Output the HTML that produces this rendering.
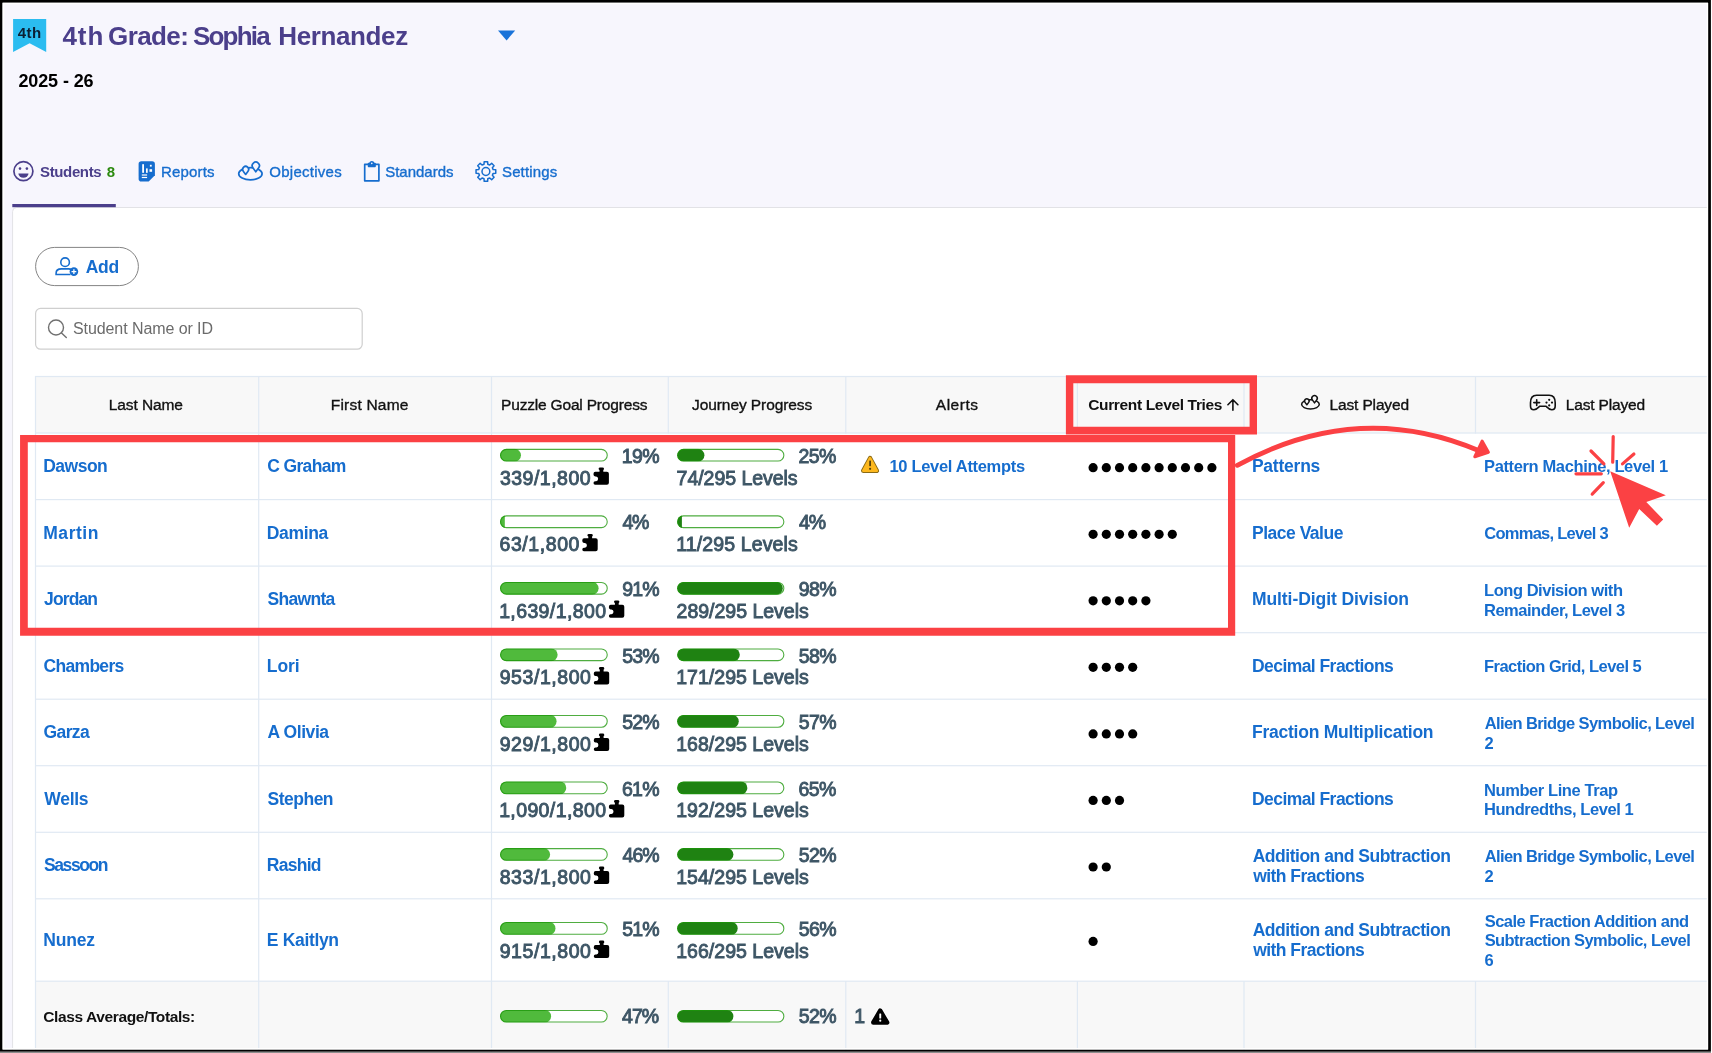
<!DOCTYPE html>
<html><head><meta charset="utf-8"><title>Students</title>
<style>
html,body{margin:0;padding:0}
body{width:1712px;height:1053px;position:relative;overflow:hidden;background:#f7f6fd;font-family:"Liberation Sans", sans-serif}
svg{position:absolute;left:0;top:0}
#bg{z-index:0} #tx{position:absolute;left:0;top:0;z-index:1;will-change:transform} #an{z-index:2}
.t{position:absolute;white-space:nowrap;line-height:20px}
</style></head><body>
<svg id="bg" width="1712" height="1053" viewBox="0 0 1712 1053">
<rect x="12.6" y="207.5" width="1720" height="900" rx="4" fill="#fff" stroke="#e2e2e6" stroke-width="1"/>
<rect x="12.3" y="204" width="103.5" height="3.2" fill="#4b3f8b"/>
<rect x="35.5" y="376.5" width="1700" height="57" fill="#f8f8f8"/>
<rect x="35.5" y="981.2" width="1700" height="80" fill="#f8f8f8"/>
<rect x="35" y="375.9" width="1700" height="1.2" fill="#e0e9f3"/>
<rect x="35" y="432.4" width="1700" height="1.2" fill="#e0e9f3"/>
<rect x="35" y="499.0" width="1700" height="1.2" fill="#e0e9f3"/>
<rect x="35" y="565.5" width="1700" height="1.2" fill="#e0e9f3"/>
<rect x="35" y="632.1" width="1700" height="1.2" fill="#e0e9f3"/>
<rect x="35" y="698.6" width="1700" height="1.2" fill="#e0e9f3"/>
<rect x="35" y="765.1" width="1700" height="1.2" fill="#e0e9f3"/>
<rect x="35" y="831.7" width="1700" height="1.2" fill="#e0e9f3"/>
<rect x="35" y="898.2" width="1700" height="1.2" fill="#e0e9f3"/>
<rect x="35" y="980.6" width="1700" height="1.2" fill="#e0e9f3"/>
<rect x="34.9" y="376" width="1.2" height="57.6" fill="#e0e9f3"/>
<rect x="34.9" y="981" width="1.2" height="80" fill="#e0e9f3"/>
<rect x="258.1" y="376" width="1.2" height="57.6" fill="#e0e9f3"/>
<rect x="258.1" y="981" width="1.2" height="80" fill="#e0e9f3"/>
<rect x="490.9" y="376" width="1.2" height="57.6" fill="#e0e9f3"/>
<rect x="490.9" y="981" width="1.2" height="80" fill="#e0e9f3"/>
<rect x="667.7" y="376" width="1.2" height="57.6" fill="#e0e9f3"/>
<rect x="667.7" y="981" width="1.2" height="80" fill="#e0e9f3"/>
<rect x="845.2" y="376" width="1.2" height="57.6" fill="#e0e9f3"/>
<rect x="845.2" y="981" width="1.2" height="80" fill="#e0e9f3"/>
<rect x="1076.8" y="376" width="1.2" height="57.6" fill="#e0e9f3"/>
<rect x="1076.8" y="981" width="1.2" height="80" fill="#e0e9f3"/>
<rect x="1243.4" y="376" width="1.2" height="57.6" fill="#e0e9f3"/>
<rect x="1243.4" y="981" width="1.2" height="80" fill="#e0e9f3"/>
<rect x="1474.9" y="376" width="1.2" height="57.6" fill="#e0e9f3"/>
<rect x="1474.9" y="981" width="1.2" height="80" fill="#e0e9f3"/>
<rect x="34.9" y="433" width="1.2" height="548" fill="#e0e9f3"/>
<rect x="258.1" y="433" width="1.2" height="548" fill="#e0e9f3"/>
<rect x="490.9" y="433" width="1.2" height="548" fill="#e0e9f3"/>
<rect x="500.00" y="448.80" width="107.80" height="12.80" rx="6.40" fill="#fff"/>
<clipPath id="c34"><rect x="500.00" y="448.80" width="107.80" height="12.80" rx="6.40"/></clipPath>
<rect clip-path="url(#c34)" x="500.00" y="448.80" width="20.98" height="12.80" rx="6.40" fill="#50ba3c"/>
<rect x="500.55" y="449.35" width="106.70" height="11.70" rx="5.85" fill="none" stroke="#1e960a" stroke-opacity="0.78" stroke-width="1.1"/>
<rect x="677.10" y="448.80" width="107.30" height="12.80" rx="6.40" fill="#fff"/>
<clipPath id="c38"><rect x="677.10" y="448.80" width="107.30" height="12.80" rx="6.40"/></clipPath>
<rect clip-path="url(#c38)" x="677.10" y="448.80" width="27.32" height="12.80" rx="6.40" fill="#1f8212"/>
<rect x="677.65" y="449.35" width="106.20" height="11.70" rx="5.85" fill="none" stroke="#1e960a" stroke-opacity="0.78" stroke-width="1.1"/>
<rect x="500.00" y="515.34" width="107.80" height="12.80" rx="6.40" fill="#fff"/>
<clipPath id="c42"><rect x="500.00" y="515.34" width="107.80" height="12.80" rx="6.40"/></clipPath>
<rect clip-path="url(#c42)" x="500.00" y="515.34" width="4.81" height="12.80" rx="0.00" fill="#50ba3c"/>
<rect x="500.55" y="515.89" width="106.70" height="11.70" rx="5.85" fill="none" stroke="#1e960a" stroke-opacity="0.78" stroke-width="1.1"/>
<rect x="677.10" y="515.34" width="107.30" height="12.80" rx="6.40" fill="#fff"/>
<clipPath id="c46"><rect x="677.10" y="515.34" width="107.30" height="12.80" rx="6.40"/></clipPath>
<rect clip-path="url(#c46)" x="677.10" y="515.34" width="4.79" height="12.80" rx="0.00" fill="#1f8212"/>
<rect x="677.65" y="515.89" width="106.20" height="11.70" rx="5.85" fill="none" stroke="#1e960a" stroke-opacity="0.78" stroke-width="1.1"/>
<rect x="500.00" y="581.88" width="107.80" height="12.80" rx="6.40" fill="#fff"/>
<clipPath id="c50"><rect x="500.00" y="581.88" width="107.80" height="12.80" rx="6.40"/></clipPath>
<rect clip-path="url(#c50)" x="500.00" y="581.88" width="98.60" height="12.80" rx="6.40" fill="#50ba3c"/>
<rect x="500.55" y="582.43" width="106.70" height="11.70" rx="5.85" fill="none" stroke="#1e960a" stroke-opacity="0.78" stroke-width="1.1"/>
<rect x="677.10" y="581.88" width="107.30" height="12.80" rx="6.40" fill="#fff"/>
<clipPath id="c54"><rect x="677.10" y="581.88" width="107.30" height="12.80" rx="6.40"/></clipPath>
<rect clip-path="url(#c54)" x="677.10" y="581.88" width="105.65" height="12.80" rx="6.40" fill="#1f8212"/>
<rect x="677.65" y="582.43" width="106.20" height="11.70" rx="5.85" fill="none" stroke="#1e960a" stroke-opacity="0.78" stroke-width="1.1"/>
<rect x="500.00" y="648.42" width="107.80" height="12.80" rx="6.40" fill="#fff"/>
<clipPath id="c58"><rect x="500.00" y="648.42" width="107.80" height="12.80" rx="6.40"/></clipPath>
<rect clip-path="url(#c58)" x="500.00" y="648.42" width="57.63" height="12.80" rx="6.40" fill="#50ba3c"/>
<rect x="500.55" y="648.97" width="106.70" height="11.70" rx="5.85" fill="none" stroke="#1e960a" stroke-opacity="0.78" stroke-width="1.1"/>
<rect x="677.10" y="648.42" width="107.30" height="12.80" rx="6.40" fill="#fff"/>
<clipPath id="c62"><rect x="677.10" y="648.42" width="107.30" height="12.80" rx="6.40"/></clipPath>
<rect clip-path="url(#c62)" x="677.10" y="648.42" width="62.73" height="12.80" rx="6.40" fill="#1f8212"/>
<rect x="677.65" y="648.97" width="106.20" height="11.70" rx="5.85" fill="none" stroke="#1e960a" stroke-opacity="0.78" stroke-width="1.1"/>
<rect x="500.00" y="714.96" width="107.80" height="12.80" rx="6.40" fill="#fff"/>
<clipPath id="c66"><rect x="500.00" y="714.96" width="107.80" height="12.80" rx="6.40"/></clipPath>
<rect clip-path="url(#c66)" x="500.00" y="714.96" width="56.56" height="12.80" rx="6.40" fill="#50ba3c"/>
<rect x="500.55" y="715.51" width="106.70" height="11.70" rx="5.85" fill="none" stroke="#1e960a" stroke-opacity="0.78" stroke-width="1.1"/>
<rect x="677.10" y="714.96" width="107.30" height="12.80" rx="6.40" fill="#fff"/>
<clipPath id="c70"><rect x="677.10" y="714.96" width="107.30" height="12.80" rx="6.40"/></clipPath>
<rect clip-path="url(#c70)" x="677.10" y="714.96" width="61.66" height="12.80" rx="6.40" fill="#1f8212"/>
<rect x="677.65" y="715.51" width="106.20" height="11.70" rx="5.85" fill="none" stroke="#1e960a" stroke-opacity="0.78" stroke-width="1.1"/>
<rect x="500.00" y="781.50" width="107.80" height="12.80" rx="6.40" fill="#fff"/>
<clipPath id="c74"><rect x="500.00" y="781.50" width="107.80" height="12.80" rx="6.40"/></clipPath>
<rect clip-path="url(#c74)" x="500.00" y="781.50" width="66.26" height="12.80" rx="6.40" fill="#50ba3c"/>
<rect x="500.55" y="782.05" width="106.70" height="11.70" rx="5.85" fill="none" stroke="#1e960a" stroke-opacity="0.78" stroke-width="1.1"/>
<rect x="677.10" y="781.50" width="107.30" height="12.80" rx="6.40" fill="#fff"/>
<clipPath id="c78"><rect x="677.10" y="781.50" width="107.30" height="12.80" rx="6.40"/></clipPath>
<rect clip-path="url(#c78)" x="677.10" y="781.50" width="70.25" height="12.80" rx="6.40" fill="#1f8212"/>
<rect x="677.65" y="782.05" width="106.20" height="11.70" rx="5.85" fill="none" stroke="#1e960a" stroke-opacity="0.78" stroke-width="1.1"/>
<rect x="500.00" y="848.04" width="107.80" height="12.80" rx="6.40" fill="#fff"/>
<clipPath id="c82"><rect x="500.00" y="848.04" width="107.80" height="12.80" rx="6.40"/></clipPath>
<rect clip-path="url(#c82)" x="500.00" y="848.04" width="50.09" height="12.80" rx="6.40" fill="#50ba3c"/>
<rect x="500.55" y="848.59" width="106.70" height="11.70" rx="5.85" fill="none" stroke="#1e960a" stroke-opacity="0.78" stroke-width="1.1"/>
<rect x="677.10" y="848.04" width="107.30" height="12.80" rx="6.40" fill="#fff"/>
<clipPath id="c86"><rect x="677.10" y="848.04" width="107.30" height="12.80" rx="6.40"/></clipPath>
<rect clip-path="url(#c86)" x="677.10" y="848.04" width="56.30" height="12.80" rx="6.40" fill="#1f8212"/>
<rect x="677.65" y="848.59" width="106.20" height="11.70" rx="5.85" fill="none" stroke="#1e960a" stroke-opacity="0.78" stroke-width="1.1"/>
<rect x="500.00" y="922.00" width="107.80" height="12.80" rx="6.40" fill="#fff"/>
<clipPath id="c90"><rect x="500.00" y="922.00" width="107.80" height="12.80" rx="6.40"/></clipPath>
<rect clip-path="url(#c90)" x="500.00" y="922.00" width="55.48" height="12.80" rx="6.40" fill="#50ba3c"/>
<rect x="500.55" y="922.55" width="106.70" height="11.70" rx="5.85" fill="none" stroke="#1e960a" stroke-opacity="0.78" stroke-width="1.1"/>
<rect x="677.10" y="922.00" width="107.30" height="12.80" rx="6.40" fill="#fff"/>
<clipPath id="c94"><rect x="677.10" y="922.00" width="107.30" height="12.80" rx="6.40"/></clipPath>
<rect clip-path="url(#c94)" x="677.10" y="922.00" width="60.59" height="12.80" rx="6.40" fill="#1f8212"/>
<rect x="677.65" y="922.55" width="106.20" height="11.70" rx="5.85" fill="none" stroke="#1e960a" stroke-opacity="0.78" stroke-width="1.1"/>
<rect x="500.00" y="1010.00" width="107.70" height="12.60" rx="6.30" fill="#fff"/>
<clipPath id="c98"><rect x="500.00" y="1010.00" width="107.70" height="12.60" rx="6.30"/></clipPath>
<rect clip-path="url(#c98)" x="500.00" y="1010.00" width="51.12" height="12.60" rx="6.30" fill="#50ba3c"/>
<rect x="500.55" y="1010.55" width="106.60" height="11.50" rx="5.75" fill="none" stroke="#1e960a" stroke-opacity="0.78" stroke-width="1.1"/>
<rect x="677.10" y="1010.00" width="107.30" height="12.60" rx="6.30" fill="#fff"/>
<clipPath id="c102"><rect x="677.10" y="1010.00" width="107.30" height="12.60" rx="6.30"/></clipPath>
<rect clip-path="url(#c102)" x="677.10" y="1010.00" width="56.30" height="12.60" rx="6.30" fill="#1f8212"/>
<rect x="677.65" y="1010.55" width="106.20" height="11.50" rx="5.75" fill="none" stroke="#1e960a" stroke-opacity="0.78" stroke-width="1.1"/>
<circle cx="1093.1" cy="467.7" r="4.6" fill="#000"/>
<circle cx="1106.3" cy="467.7" r="4.6" fill="#000"/>
<circle cx="1119.5" cy="467.7" r="4.6" fill="#000"/>
<circle cx="1132.7" cy="467.7" r="4.6" fill="#000"/>
<circle cx="1145.9" cy="467.7" r="4.6" fill="#000"/>
<circle cx="1159.1" cy="467.7" r="4.6" fill="#000"/>
<circle cx="1172.3" cy="467.7" r="4.6" fill="#000"/>
<circle cx="1185.5" cy="467.7" r="4.6" fill="#000"/>
<circle cx="1198.7" cy="467.7" r="4.6" fill="#000"/>
<circle cx="1211.9" cy="467.7" r="4.6" fill="#000"/>
<circle cx="1093.1" cy="534.3" r="4.6" fill="#000"/>
<circle cx="1106.3" cy="534.3" r="4.6" fill="#000"/>
<circle cx="1119.5" cy="534.3" r="4.6" fill="#000"/>
<circle cx="1132.7" cy="534.3" r="4.6" fill="#000"/>
<circle cx="1145.9" cy="534.3" r="4.6" fill="#000"/>
<circle cx="1159.1" cy="534.3" r="4.6" fill="#000"/>
<circle cx="1172.3" cy="534.3" r="4.6" fill="#000"/>
<circle cx="1093.1" cy="600.8" r="4.6" fill="#000"/>
<circle cx="1106.3" cy="600.8" r="4.6" fill="#000"/>
<circle cx="1119.5" cy="600.8" r="4.6" fill="#000"/>
<circle cx="1132.7" cy="600.8" r="4.6" fill="#000"/>
<circle cx="1145.9" cy="600.8" r="4.6" fill="#000"/>
<circle cx="1093.1" cy="667.3" r="4.6" fill="#000"/>
<circle cx="1106.3" cy="667.3" r="4.6" fill="#000"/>
<circle cx="1119.5" cy="667.3" r="4.6" fill="#000"/>
<circle cx="1132.7" cy="667.3" r="4.6" fill="#000"/>
<circle cx="1093.1" cy="733.9" r="4.6" fill="#000"/>
<circle cx="1106.3" cy="733.9" r="4.6" fill="#000"/>
<circle cx="1119.5" cy="733.9" r="4.6" fill="#000"/>
<circle cx="1132.7" cy="733.9" r="4.6" fill="#000"/>
<circle cx="1093.1" cy="800.4" r="4.6" fill="#000"/>
<circle cx="1106.3" cy="800.4" r="4.6" fill="#000"/>
<circle cx="1119.5" cy="800.4" r="4.6" fill="#000"/>
<circle cx="1093.1" cy="867.0" r="4.6" fill="#000"/>
<circle cx="1106.3" cy="867.0" r="4.6" fill="#000"/>
<circle cx="1093.1" cy="941.4" r="4.6" fill="#000"/>
<path transform="translate(593.5,467.4)" d="M6 4.4 L6 2.6 Q5.1 2.4 5.1 1.4 Q5.1 0 6.6 0 L9 0 Q10.5 0 10.5 1.4 Q10.5 2.4 9.8 2.6 L9.8 4.4 L13.4 4.4 Q15.4 4.4 15.4 6.4 L15.4 15.4 Q15.4 17.4 13.4 17.4 L1.6 17.4 Q0 17.4 0 15.7 Q0 13.9 1.6 13.9 L2.6 13.9 A2.5 2.5 0 0 0 2.6 9 L1.6 9 Q0 9 0 7.2 L0 6.4 Q0 4.4 1.8 4.4 Z" fill="#000"/>
<path transform="translate(582.3,533.9)" d="M6 4.4 L6 2.6 Q5.1 2.4 5.1 1.4 Q5.1 0 6.6 0 L9 0 Q10.5 0 10.5 1.4 Q10.5 2.4 9.8 2.6 L9.8 4.4 L13.4 4.4 Q15.4 4.4 15.4 6.4 L15.4 15.4 Q15.4 17.4 13.4 17.4 L1.6 17.4 Q0 17.4 0 15.7 Q0 13.9 1.6 13.9 L2.6 13.9 A2.5 2.5 0 0 0 2.6 9 L1.6 9 Q0 9 0 7.2 L0 6.4 Q0 4.4 1.8 4.4 Z" fill="#000"/>
<path transform="translate(608.9,600.4)" d="M6 4.4 L6 2.6 Q5.1 2.4 5.1 1.4 Q5.1 0 6.6 0 L9 0 Q10.5 0 10.5 1.4 Q10.5 2.4 9.8 2.6 L9.8 4.4 L13.4 4.4 Q15.4 4.4 15.4 6.4 L15.4 15.4 Q15.4 17.4 13.4 17.4 L1.6 17.4 Q0 17.4 0 15.7 Q0 13.9 1.6 13.9 L2.6 13.9 A2.5 2.5 0 0 0 2.6 9 L1.6 9 Q0 9 0 7.2 L0 6.4 Q0 4.4 1.8 4.4 Z" fill="#000"/>
<path transform="translate(593.8,667.0)" d="M6 4.4 L6 2.6 Q5.1 2.4 5.1 1.4 Q5.1 0 6.6 0 L9 0 Q10.5 0 10.5 1.4 Q10.5 2.4 9.8 2.6 L9.8 4.4 L13.4 4.4 Q15.4 4.4 15.4 6.4 L15.4 15.4 Q15.4 17.4 13.4 17.4 L1.6 17.4 Q0 17.4 0 15.7 Q0 13.9 1.6 13.9 L2.6 13.9 A2.5 2.5 0 0 0 2.6 9 L1.6 9 Q0 9 0 7.2 L0 6.4 Q0 4.4 1.8 4.4 Z" fill="#000"/>
<path transform="translate(593.8,733.5)" d="M6 4.4 L6 2.6 Q5.1 2.4 5.1 1.4 Q5.1 0 6.6 0 L9 0 Q10.5 0 10.5 1.4 Q10.5 2.4 9.8 2.6 L9.8 4.4 L13.4 4.4 Q15.4 4.4 15.4 6.4 L15.4 15.4 Q15.4 17.4 13.4 17.4 L1.6 17.4 Q0 17.4 0 15.7 Q0 13.9 1.6 13.9 L2.6 13.9 A2.5 2.5 0 0 0 2.6 9 L1.6 9 Q0 9 0 7.2 L0 6.4 Q0 4.4 1.8 4.4 Z" fill="#000"/>
<path transform="translate(608.9,800.1)" d="M6 4.4 L6 2.6 Q5.1 2.4 5.1 1.4 Q5.1 0 6.6 0 L9 0 Q10.5 0 10.5 1.4 Q10.5 2.4 9.8 2.6 L9.8 4.4 L13.4 4.4 Q15.4 4.4 15.4 6.4 L15.4 15.4 Q15.4 17.4 13.4 17.4 L1.6 17.4 Q0 17.4 0 15.7 Q0 13.9 1.6 13.9 L2.6 13.9 A2.5 2.5 0 0 0 2.6 9 L1.6 9 Q0 9 0 7.2 L0 6.4 Q0 4.4 1.8 4.4 Z" fill="#000"/>
<path transform="translate(593.8,866.6)" d="M6 4.4 L6 2.6 Q5.1 2.4 5.1 1.4 Q5.1 0 6.6 0 L9 0 Q10.5 0 10.5 1.4 Q10.5 2.4 9.8 2.6 L9.8 4.4 L13.4 4.4 Q15.4 4.4 15.4 6.4 L15.4 15.4 Q15.4 17.4 13.4 17.4 L1.6 17.4 Q0 17.4 0 15.7 Q0 13.9 1.6 13.9 L2.6 13.9 A2.5 2.5 0 0 0 2.6 9 L1.6 9 Q0 9 0 7.2 L0 6.4 Q0 4.4 1.8 4.4 Z" fill="#000"/>
<path transform="translate(593.8,940.6)" d="M6 4.4 L6 2.6 Q5.1 2.4 5.1 1.4 Q5.1 0 6.6 0 L9 0 Q10.5 0 10.5 1.4 Q10.5 2.4 9.8 2.6 L9.8 4.4 L13.4 4.4 Q15.4 4.4 15.4 6.4 L15.4 15.4 Q15.4 17.4 13.4 17.4 L1.6 17.4 Q0 17.4 0 15.7 Q0 13.9 1.6 13.9 L2.6 13.9 A2.5 2.5 0 0 0 2.6 9 L1.6 9 Q0 9 0 7.2 L0 6.4 Q0 4.4 1.8 4.4 Z" fill="#000"/>
<path d="M13.1 19 H46.2 V52 L29.6 43.2 L13.1 52 Z" fill="#2bbcf0"/>
<path d="M498 30.4 H515.2 L506.6 40.4 Z" fill="#1a73d9"/>
<g fill="none" stroke="#4b3f8b" stroke-width="1.7"><circle cx="23.4" cy="171.2" r="9.5"/></g>
<g fill="#4b3f8b"><circle cx="20.0" cy="168.6" r="1.3"/><circle cx="26.9" cy="168.6" r="1.3"/><path d="M18.4 173.6 H28.5 A5.05 4.2 0 0 1 18.4 173.6 Z"/></g>
<path d="M141.4 161.2 H152.1 Q154.9 161.2 154.9 164 V175.3 L148.7 181.5 H141.4 Q138.6 181.5 138.6 178.7 V164 Q138.6 161.2 141.4 161.2 Z" fill="#166dce"/>
<g fill="#fff"><rect x="142.2" y="164.2" width="1.8" height="8.6"/><rect x="146.0" y="168.4" width="1.7" height="4.4"/><rect x="149.9" y="164.8" width="1.8" height="1.8"/><rect x="149.5" y="169.2" width="2.6" height="2.6"/><rect x="141.8" y="174.4" width="5.3" height="1.2"/><rect x="141.8" y="176.9" width="5.3" height="1.2"/></g>
<g transform="translate(237.9,161.4) scale(1.0)" fill="#f7f6fd" stroke="#166dce" stroke-width="1.70" stroke-linejoin="round"><ellipse cx="12.5" cy="12.4" rx="11.7" ry="6.1" fill="none"/><path d="M7.75 13.00 L5.35 9.80 A3.0 3.0 0 1 1 10.15 9.80 Z"/><path d="M17.90 10.40 L14.99 6.42 A3.6 3.6 0 1 1 20.81 6.42 Z"/></g>
<g transform="translate(1301.0,395.0) scale(0.756)" fill="#f8f8f8" stroke="#111" stroke-width="1.98" stroke-linejoin="round"><ellipse cx="12.5" cy="12.4" rx="11.7" ry="6.1" fill="none"/><path d="M7.75 13.00 L5.35 9.80 A3.0 3.0 0 1 1 10.15 9.80 Z"/><path d="M17.90 10.40 L14.99 6.42 A3.6 3.6 0 1 1 20.81 6.42 Z"/></g>
<g fill="none" stroke="#166dce" stroke-width="1.7" stroke-linejoin="round"><path d="M368.6 164.3 H364.7 V180.8 H378.9 V164.3 H375"/><path d="M368.6 166.3 V163.6 H370 A1.8 1.8 0 0 1 373.6 163.6 H375 V166.3 Z" fill="#166dce"/></g>
<circle cx="371.8" cy="163.4" r="0.8" fill="#f7f6fd"/>
<path d="M484.02 164.24 L484.19 161.65 L487.61 161.65 L487.78 164.24 L489.71 165.04 L491.66 163.33 L494.07 165.74 L492.36 167.69 L493.16 169.62 L495.75 169.79 L495.75 173.21 L493.16 173.38 L492.36 175.31 L494.07 177.26 L491.66 179.67 L489.71 177.96 L487.78 178.76 L487.61 181.35 L484.19 181.35 L484.02 178.76 L482.09 177.96 L480.14 179.67 L477.73 177.26 L479.44 175.31 L478.64 173.38 L476.05 173.21 L476.05 169.79 L478.64 169.62 L479.44 167.69 L477.73 165.74 L480.14 163.33 L482.09 165.04 Z" fill="none" stroke="#166dce" stroke-width="1.5" stroke-linejoin="round"/>
<circle cx="485.9" cy="171.5" r="3.9" fill="none" stroke="#166dce" stroke-width="1.5"/>
<rect x="35.6" y="247.4" width="102.8" height="38.2" rx="19.1" fill="#fff" stroke="#848484" stroke-width="1"/>
<g fill="none" stroke="#166dce" stroke-width="1.6"><circle cx="65.1" cy="262.2" r="4.3"/><path d="M70.5 274.5 H56.1 V273.2 Q56.1 268.9 61.4 268.9 H68.8 Q70.6 268.9 71.6 269.5"/></g>
<circle cx="73.9" cy="271.6" r="4.3" fill="#166dce"/><path d="M71.5 271.6 H76.3 M73.9 269.2 V274" stroke="#fff" stroke-width="1.3"/>
<rect x="35.6" y="308.4" width="326.6" height="40.8" rx="5" fill="#fff" stroke="#cfcfcf" stroke-width="1.2"/>
<g fill="none" stroke="#707070" stroke-width="1.4" stroke-linecap="round"><circle cx="56.0" cy="327.5" r="7.5"/><path d="M61.5 333 L66.3 337.6"/></g>
<g fill="none" stroke="#111" stroke-width="1.6" stroke-linejoin="round" stroke-linecap="round"><path d="M1536.6 395.2 H1549.2 C1553.4 395.2 1555.2 398.4 1555.2 402.8 V406 C1555.2 409 1553.5 409.8 1551.8 409.8 C1549.5 409.8 1548 408.2 1546.5 406.7 L1545.8 406.2 H1539.9 L1539.2 406.7 C1537.7 408.2 1536.2 409.8 1533.9 409.8 C1532.2 409.8 1530.5 409 1530.5 406 V402.8 C1530.5 398.4 1532.3 395.2 1536.6 395.2 Z"/><path d="M1533.8 402.6 H1539.6 M1536.7 399.7 V405.5"/></g>
<g fill="#111"><circle cx="1549.2" cy="399.8" r="1.1"/><circle cx="1546.5" cy="402.6" r="1.1"/><circle cx="1552.0" cy="402.6" r="1.1"/><circle cx="1549.2" cy="405.4" r="1.1"/></g>
<path d="M1232.9 410.2 V399.8 M1227.9 404.7 L1232.9 399.7 L1237.9 404.7" fill="none" stroke="#111" stroke-width="1.6" stroke-linecap="round" stroke-linejoin="round"/>
<path d="M870.05 457.9 L877.0 470.8 H863.1 Z" fill="#8a6a14" stroke="#8a6a14" stroke-width="4.2" stroke-linejoin="round"/>
<path d="M870.05 457.9 L877.0 470.8 H863.1 Z" fill="#fdb81e" stroke="#fdb81e" stroke-width="2.3" stroke-linejoin="round"/>
<rect x="869.2" y="460.4" width="1.8" height="5.8" rx="0.6" fill="#5b430b"/><circle cx="870.1" cy="468.8" r="1.1" fill="#5b430b"/>
<path d="M880.2 1010.7 L887.1 1022.5 H873.3 Z" fill="#fff" stroke="#fff" stroke-width="6.2" stroke-linejoin="round" opacity="0.9"/>
<path d="M880.2 1010.7 L887.1 1022.5 H873.3 Z" fill="#000" stroke="#000" stroke-width="4.5" stroke-linejoin="round"/>
<rect x="879.3" y="1013.4" width="1.9" height="5.2" rx="0.5" fill="#fff"/><circle cx="880.25" cy="1020.7" r="1.1" fill="#fff"/>
</svg>
<div id="tx">
<span class="t" style="left:17.85px;top:23.00px;font-size:15px;font-weight:700;color:#0b1f33;letter-spacing:0.381px">4th</span>
<span class="t" style="left:62.54px;top:26.00px;font-size:26px;font-weight:700;color:#4b3f8b;letter-spacing:0.871px">4th</span>
<span class="t" style="left:108.06px;top:26.00px;font-size:26px;font-weight:700;color:#4b3f8b;letter-spacing:-0.609px">Grade:</span>
<span class="t" style="left:192.88px;top:26.00px;font-size:26px;font-weight:700;color:#4b3f8b;letter-spacing:-1.762px">Sophia</span>
<span class="t" style="left:278.24px;top:26.00px;font-size:26px;font-weight:700;color:#4b3f8b;letter-spacing:-0.372px">Hernandez</span>
<span class="t" style="left:18.46px;top:71.00px;font-size:18px;font-weight:700;color:#000;letter-spacing:-0.121px">2025 - 26</span>
<span class="t" style="left:40.00px;top:162.00px;font-size:15px;font-weight:700;color:#4b3f8b;letter-spacing:-0.361px">Students</span>
<span class="t" style="left:106.75px;top:162.00px;font-size:15px;font-weight:700;color:#2c8a0f;letter-spacing:0.000px">8</span>
<span class="t" style="left:160.90px;top:162.00px;font-size:15px;font-weight:400;color:#166dce;letter-spacing:0.188px;-webkit-text-stroke:0.35px">Reports</span>
<span class="t" style="left:269.30px;top:162.00px;font-size:15px;font-weight:400;color:#166dce;letter-spacing:0.258px;-webkit-text-stroke:0.35px">Objectives</span>
<span class="t" style="left:385.20px;top:162.00px;font-size:15px;font-weight:400;color:#166dce;letter-spacing:-0.004px;-webkit-text-stroke:0.35px">Standards</span>
<span class="t" style="left:502.00px;top:162.00px;font-size:15px;font-weight:400;color:#166dce;letter-spacing:0.136px;-webkit-text-stroke:0.35px">Settings</span>
<span class="t" style="left:85.75px;top:257.00px;font-size:17.5px;font-weight:700;color:#166dce;letter-spacing:-0.351px">Add</span>
<span class="t" style="left:72.96px;top:319.00px;font-size:16px;font-weight:400;color:#6b6b6b;letter-spacing:-0.081px">Student Name or ID</span>
<span class="t" style="left:108.76px;top:395.00px;font-size:15.5px;font-weight:400;color:#111;letter-spacing:-0.094px;-webkit-text-stroke:0.35px">Last Name</span>
<span class="t" style="left:330.76px;top:395.00px;font-size:15.5px;font-weight:400;color:#111;letter-spacing:0.213px;-webkit-text-stroke:0.35px">First Name</span>
<span class="t" style="left:501.06px;top:395.00px;font-size:15.5px;font-weight:400;color:#111;letter-spacing:-0.184px;-webkit-text-stroke:0.35px">Puzzle Goal Progress</span>
<span class="t" style="left:692.05px;top:395.00px;font-size:15.5px;font-weight:400;color:#111;letter-spacing:-0.083px;-webkit-text-stroke:0.35px">Journey Progress</span>
<span class="t" style="left:935.80px;top:395.00px;font-size:15.5px;font-weight:400;color:#111;letter-spacing:0.509px;-webkit-text-stroke:0.35px">Alerts</span>
<span class="t" style="left:1088.18px;top:395.00px;font-size:15.5px;font-weight:700;color:#111;letter-spacing:-0.341px">Current Level Tries</span>
<span class="t" style="left:1329.56px;top:395.00px;font-size:15.5px;font-weight:400;color:#111;letter-spacing:-0.149px;-webkit-text-stroke:0.35px">Last Played</span>
<span class="t" style="left:1565.76px;top:395.00px;font-size:15.5px;font-weight:400;color:#111;letter-spacing:-0.159px;-webkit-text-stroke:0.35px">Last Played</span>
<span class="t" style="left:43.25px;top:456.00px;font-size:17.5px;font-weight:700;color:#166dce;letter-spacing:-0.516px">Dawson</span>
<span class="t" style="left:267.20px;top:456.00px;font-size:17.5px;font-weight:700;color:#166dce;letter-spacing:-0.629px">C Graham</span>
<span class="t" style="left:621.63px;top:446.00px;font-size:19.5px;font-weight:400;color:#3e5666;letter-spacing:-0.547px;-webkit-text-stroke:0.9px">19%</span>
<span class="t" style="left:499.92px;top:468.00px;font-size:19.5px;font-weight:400;color:#3e5666;letter-spacing:0.492px;-webkit-text-stroke:0.9px">339/1,800</span>
<span class="t" style="left:798.52px;top:446.00px;font-size:19.5px;font-weight:400;color:#3e5666;letter-spacing:-0.542px;-webkit-text-stroke:0.9px">25%</span>
<span class="t" style="left:676.62px;top:468.00px;font-size:19.5px;font-weight:400;color:#3e5666;letter-spacing:-0.039px;-webkit-text-stroke:0.9px">74/295 Levels</span>
<span class="t" style="left:1251.95px;top:456.00px;font-size:17.5px;font-weight:700;color:#166dce;letter-spacing:-0.235px">Patterns</span>
<span class="t" style="left:1484.01px;top:456.00px;font-size:16.5px;font-weight:700;color:#166dce;letter-spacing:-0.367px">Pattern Machine, Level 1</span>
<span class="t" style="left:43.25px;top:523.00px;font-size:17.5px;font-weight:700;color:#166dce;letter-spacing:0.543px">Martin</span>
<span class="t" style="left:266.85px;top:523.00px;font-size:17.5px;font-weight:700;color:#166dce;letter-spacing:-0.362px">Damina</span>
<span class="t" style="left:622.61px;top:512.00px;font-size:19.5px;font-weight:400;color:#3e5666;letter-spacing:-1.525px;-webkit-text-stroke:0.9px">4%</span>
<span class="t" style="left:499.52px;top:534.00px;font-size:19.5px;font-weight:400;color:#3e5666;letter-spacing:0.568px;-webkit-text-stroke:0.9px">63/1,800</span>
<span class="t" style="left:799.11px;top:512.00px;font-size:19.5px;font-weight:400;color:#3e5666;letter-spacing:-1.125px;-webkit-text-stroke:0.9px">4%</span>
<span class="t" style="left:676.24px;top:534.00px;font-size:19.5px;font-weight:400;color:#3e5666;letter-spacing:0.131px;-webkit-text-stroke:0.9px">11/295 Levels</span>
<span class="t" style="left:1251.95px;top:523.00px;font-size:17.5px;font-weight:700;color:#166dce;letter-spacing:-0.481px">Place Value</span>
<span class="t" style="left:1484.34px;top:523.00px;font-size:16.5px;font-weight:700;color:#166dce;letter-spacing:-0.754px">Commas, Level 3</span>
<span class="t" style="left:44.12px;top:589.00px;font-size:17.5px;font-weight:700;color:#166dce;letter-spacing:-0.881px">Jordan</span>
<span class="t" style="left:267.55px;top:589.00px;font-size:17.5px;font-weight:700;color:#166dce;letter-spacing:-0.692px">Shawnta</span>
<span class="t" style="left:622.22px;top:579.00px;font-size:19.5px;font-weight:400;color:#3e5666;letter-spacing:-0.840px;-webkit-text-stroke:0.9px">91%</span>
<span class="t" style="left:499.13px;top:601.00px;font-size:19.5px;font-weight:400;color:#3e5666;letter-spacing:0.386px;-webkit-text-stroke:0.9px">1,639/1,800</span>
<span class="t" style="left:798.72px;top:579.00px;font-size:19.5px;font-weight:400;color:#3e5666;letter-spacing:-0.640px;-webkit-text-stroke:0.9px">98%</span>
<span class="t" style="left:676.62px;top:601.00px;font-size:19.5px;font-weight:400;color:#3e5666;letter-spacing:-0.009px;-webkit-text-stroke:0.9px">289/295 Levels</span>
<span class="t" style="left:1251.95px;top:589.00px;font-size:17.5px;font-weight:700;color:#166dce;letter-spacing:-0.071px">Multi-Digit Division</span>
<span class="t" style="left:1484.01px;top:580.00px;font-size:16.5px;font-weight:700;color:#166dce;letter-spacing:-0.451px">Long Division with</span>
<span class="t" style="left:1484.01px;top:600.00px;font-size:16.5px;font-weight:700;color:#166dce;letter-spacing:-0.494px">Remainder, Level 3</span>
<span class="t" style="left:43.60px;top:656.00px;font-size:17.5px;font-weight:700;color:#166dce;letter-spacing:-0.708px">Chambers</span>
<span class="t" style="left:266.85px;top:656.00px;font-size:17.5px;font-weight:700;color:#166dce;letter-spacing:-0.105px">Lori</span>
<span class="t" style="left:622.22px;top:646.00px;font-size:19.5px;font-weight:400;color:#3e5666;letter-spacing:-0.840px;-webkit-text-stroke:0.9px">53%</span>
<span class="t" style="left:499.72px;top:667.00px;font-size:19.5px;font-weight:400;color:#3e5666;letter-spacing:0.554px;-webkit-text-stroke:0.9px">953/1,800</span>
<span class="t" style="left:798.72px;top:646.00px;font-size:19.5px;font-weight:400;color:#3e5666;letter-spacing:-0.640px;-webkit-text-stroke:0.9px">58%</span>
<span class="t" style="left:676.24px;top:667.00px;font-size:19.5px;font-weight:400;color:#3e5666;letter-spacing:0.021px;-webkit-text-stroke:0.9px">171/295 Levels</span>
<span class="t" style="left:1251.95px;top:656.00px;font-size:17.5px;font-weight:700;color:#166dce;letter-spacing:-0.554px">Decimal Fractions</span>
<span class="t" style="left:1484.01px;top:656.00px;font-size:16.5px;font-weight:700;color:#166dce;letter-spacing:-0.523px">Fraction Grid, Level 5</span>
<span class="t" style="left:43.60px;top:722.00px;font-size:17.5px;font-weight:700;color:#166dce;letter-spacing:-0.645px">Garza</span>
<span class="t" style="left:267.55px;top:722.00px;font-size:17.5px;font-weight:700;color:#166dce;letter-spacing:-0.422px">A Olivia</span>
<span class="t" style="left:622.22px;top:712.00px;font-size:19.5px;font-weight:400;color:#3e5666;letter-spacing:-0.840px;-webkit-text-stroke:0.9px">52%</span>
<span class="t" style="left:499.72px;top:734.00px;font-size:19.5px;font-weight:400;color:#3e5666;letter-spacing:0.554px;-webkit-text-stroke:0.9px">929/1,800</span>
<span class="t" style="left:798.72px;top:712.00px;font-size:19.5px;font-weight:400;color:#3e5666;letter-spacing:-0.640px;-webkit-text-stroke:0.9px">57%</span>
<span class="t" style="left:676.24px;top:734.00px;font-size:19.5px;font-weight:400;color:#3e5666;letter-spacing:0.021px;-webkit-text-stroke:0.9px">168/295 Levels</span>
<span class="t" style="left:1251.95px;top:722.00px;font-size:17.5px;font-weight:700;color:#166dce;letter-spacing:-0.230px">Fraction Multiplication</span>
<span class="t" style="left:1484.67px;top:713.00px;font-size:16.5px;font-weight:700;color:#166dce;letter-spacing:-0.601px">Alien Bridge Symbolic, Level</span>
<span class="t" style="left:1484.51px;top:733.00px;font-size:16.5px;font-weight:700;color:#166dce;letter-spacing:0.000px">2</span>
<span class="t" style="left:44.30px;top:789.00px;font-size:17.5px;font-weight:700;color:#166dce;letter-spacing:-0.289px">Wells</span>
<span class="t" style="left:267.55px;top:789.00px;font-size:17.5px;font-weight:700;color:#166dce;letter-spacing:-0.503px">Stephen</span>
<span class="t" style="left:622.02px;top:779.00px;font-size:19.5px;font-weight:400;color:#3e5666;letter-spacing:-0.742px;-webkit-text-stroke:0.9px">61%</span>
<span class="t" style="left:499.13px;top:800.00px;font-size:19.5px;font-weight:400;color:#3e5666;letter-spacing:0.386px;-webkit-text-stroke:0.9px">1,090/1,800</span>
<span class="t" style="left:798.52px;top:779.00px;font-size:19.5px;font-weight:400;color:#3e5666;letter-spacing:-0.542px;-webkit-text-stroke:0.9px">65%</span>
<span class="t" style="left:676.24px;top:800.00px;font-size:19.5px;font-weight:400;color:#3e5666;letter-spacing:0.021px;-webkit-text-stroke:0.9px">192/295 Levels</span>
<span class="t" style="left:1251.95px;top:789.00px;font-size:17.5px;font-weight:700;color:#166dce;letter-spacing:-0.554px">Decimal Fractions</span>
<span class="t" style="left:1484.01px;top:780.00px;font-size:16.5px;font-weight:700;color:#166dce;letter-spacing:-0.414px">Number Line Trap</span>
<span class="t" style="left:1484.01px;top:799.00px;font-size:16.5px;font-weight:700;color:#166dce;letter-spacing:-0.449px">Hundredths, Level 1</span>
<span class="t" style="left:43.95px;top:855.00px;font-size:17.5px;font-weight:700;color:#166dce;letter-spacing:-1.387px">Sassoon</span>
<span class="t" style="left:266.85px;top:855.00px;font-size:17.5px;font-weight:700;color:#166dce;letter-spacing:-0.726px">Rashid</span>
<span class="t" style="left:622.61px;top:845.00px;font-size:19.5px;font-weight:400;color:#3e5666;letter-spacing:-1.035px;-webkit-text-stroke:0.9px">46%</span>
<span class="t" style="left:499.72px;top:867.00px;font-size:19.5px;font-weight:400;color:#3e5666;letter-spacing:0.554px;-webkit-text-stroke:0.9px">833/1,800</span>
<span class="t" style="left:798.72px;top:845.00px;font-size:19.5px;font-weight:400;color:#3e5666;letter-spacing:-0.640px;-webkit-text-stroke:0.9px">52%</span>
<span class="t" style="left:676.24px;top:867.00px;font-size:19.5px;font-weight:400;color:#3e5666;letter-spacing:0.021px;-webkit-text-stroke:0.9px">154/295 Levels</span>
<span class="t" style="left:1252.65px;top:846.00px;font-size:17.5px;font-weight:700;color:#166dce;letter-spacing:-0.469px">Addition and Subtraction</span>
<span class="t" style="left:1253.17px;top:866.00px;font-size:17.5px;font-weight:700;color:#166dce;letter-spacing:-0.536px">with Fractions</span>
<span class="t" style="left:1484.67px;top:846.00px;font-size:16.5px;font-weight:700;color:#166dce;letter-spacing:-0.601px">Alien Bridge Symbolic, Level</span>
<span class="t" style="left:1484.51px;top:866.00px;font-size:16.5px;font-weight:700;color:#166dce;letter-spacing:0.000px">2</span>
<span class="t" style="left:43.25px;top:930.00px;font-size:17.5px;font-weight:700;color:#166dce;letter-spacing:-0.206px">Nunez</span>
<span class="t" style="left:266.85px;top:930.00px;font-size:17.5px;font-weight:700;color:#166dce;letter-spacing:-0.333px">E Kaitlyn</span>
<span class="t" style="left:622.22px;top:919.00px;font-size:19.5px;font-weight:400;color:#3e5666;letter-spacing:-0.840px;-webkit-text-stroke:0.9px">51%</span>
<span class="t" style="left:499.72px;top:941.00px;font-size:19.5px;font-weight:400;color:#3e5666;letter-spacing:0.554px;-webkit-text-stroke:0.9px">915/1,800</span>
<span class="t" style="left:798.72px;top:919.00px;font-size:19.5px;font-weight:400;color:#3e5666;letter-spacing:-0.640px;-webkit-text-stroke:0.9px">56%</span>
<span class="t" style="left:676.24px;top:941.00px;font-size:19.5px;font-weight:400;color:#3e5666;letter-spacing:0.021px;-webkit-text-stroke:0.9px">166/295 Levels</span>
<span class="t" style="left:1252.65px;top:920.00px;font-size:17.5px;font-weight:700;color:#166dce;letter-spacing:-0.469px">Addition and Subtraction</span>
<span class="t" style="left:1253.17px;top:940.00px;font-size:17.5px;font-weight:700;color:#166dce;letter-spacing:-0.536px">with Fractions</span>
<span class="t" style="left:1484.67px;top:911.00px;font-size:16.5px;font-weight:700;color:#166dce;letter-spacing:-0.506px">Scale Fraction Addition and</span>
<span class="t" style="left:1484.67px;top:930.00px;font-size:16.5px;font-weight:700;color:#166dce;letter-spacing:-0.570px">Subtraction Symbolic, Level</span>
<span class="t" style="left:1484.51px;top:950.00px;font-size:16.5px;font-weight:700;color:#166dce;letter-spacing:0.000px">6</span>
<span class="t" style="left:889.51px;top:456.00px;font-size:16.5px;font-weight:700;color:#166dce;letter-spacing:-0.314px">10 Level Attempts</span>
<span class="t" style="left:43.28px;top:1007.00px;font-size:15.5px;font-weight:700;color:#111;letter-spacing:-0.383px">Class Average/Totals:</span>
<span class="t" style="left:622.01px;top:1006.00px;font-size:19.5px;font-weight:400;color:#3e5666;letter-spacing:-0.935px;-webkit-text-stroke:0.9px">47%</span>
<span class="t" style="left:798.82px;top:1006.00px;font-size:19.5px;font-weight:400;color:#3e5666;letter-spacing:-0.640px;-webkit-text-stroke:0.9px">52%</span>
<span class="t" style="left:854.24px;top:1006.00px;font-size:19.5px;font-weight:400;color:#3e5666;letter-spacing:0.000px;-webkit-text-stroke:0.9px">1</span>
</div>
<svg id="an" width="1712" height="1053" viewBox="0 0 1712 1053">
<path d="M20.06 434.95 H1235.2 V635.85 H20.06 Z M27.8 442.3 V627.8 H1228.0 V442.3 Z" fill="#fb4144" fill-rule="evenodd"/>
<path d="M1065.9 375.2 H1257.0 V434.4 H1065.9 Z M1073.3 383.3 V426.8 H1249.6 V383.3 Z" fill="#fb4144" fill-rule="evenodd"/>
<path d="M1237.3 465.3 Q1357.9 399.5 1478.5 450.5" fill="none" stroke="#fb4144" stroke-width="4.8" stroke-linecap="round"/>
<path d="M1482.1 441.1 L1488.4 452.3 L1474.8 456.7 Z" fill="#fb4144" stroke="#fb4144" stroke-width="3" stroke-linejoin="round"/>
<g stroke="#fb4144" stroke-width="3.2" stroke-linecap="round"><path d="M1613.2 436.5 L1612.7 462.2"/><path d="M1591 451 L1603.9 463.9"/><path d="M1633.9 454 L1622.5 463.9"/><path d="M1576 473.8 L1601.3 473.8"/><path d="M1603.3 482.7 L1592.2 494.1"/></g>
<path d="M1610.2 471.3 L1665.8 495.2 L1646.3 502.1 L1663.2 519.4 L1656.9 525.8 L1639.2 508.9 L1629.2 527.7 Z" fill="#fb4144"/>
<path d="M0 0 H1710.95 V1051.8 H0 Z M2.56 2.85 V1049.5 H1708.1 V2.85 Z" fill="#000" fill-rule="evenodd"/>
<path d="M2.56 2.85 H1708.1 V1049.5 H2.56 Z M4.27 4.27 V1048 H1706.8 V4.27 Z" fill="#fff" fill-rule="evenodd"/>
<rect x="0" y="1051.8" width="1712" height="1.2" fill="#8e8e8e"/><rect x="1710.95" y="0" width="1.05" height="1053" fill="#fff"/>
</svg>
</body></html>
